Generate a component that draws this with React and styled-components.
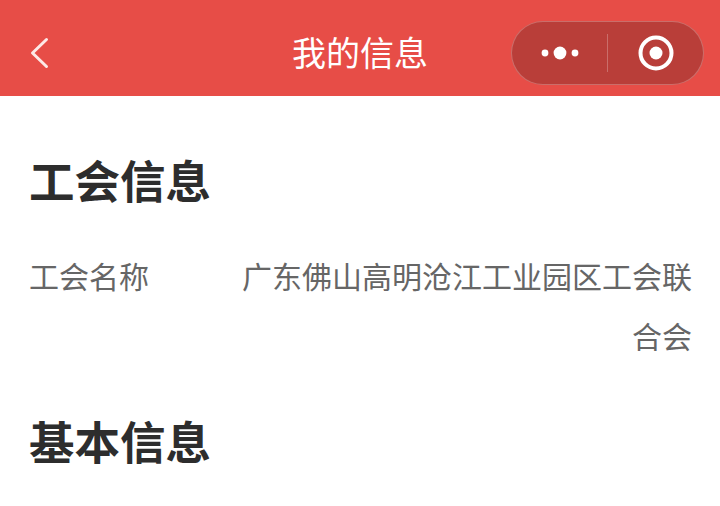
import React from 'react';
import styled, { createGlobalStyle } from 'styled-components';

const GlobalStyle = createGlobalStyle`
  html, body {
    margin: 0;
    padding: 0;
    background: #fff;
    font-family: "Noto Sans CJK SC", "Noto Sans", sans-serif;
  }
`;

const Page = styled.div`
  width: 720px;
  height: 506px;
  overflow: hidden;
  background: #fff;
`;

const NavBar = styled.header`
  height: 96px;
  background: #e74d47;
  display: grid;
  grid-template-columns: 1fr auto 1fr;
  align-items: center;
  box-sizing: border-box;
  padding: 10px 16px 0;
`;

const BackButton = styled.div`
  display: flex;
  align-items: center;
  height: 32px;
  margin-left: 14px;
`;

const NavTitle = styled.h1`
  margin: 0 0 2px;
  font-size: 34px;
  font-weight: 400;
  line-height: 1;
  color: #fff;
`;

const Capsule = styled.div`
  justify-self: end;
  width: 193px;
  height: 64px;
  box-sizing: border-box;
  border: 1px solid rgba(255, 255, 255, 0.25);
  border-radius: 32px;
  background: #b93e39;
  display: flex;
  align-items: center;
`;

const CapsuleCell = styled.div`
  flex: 1;
  display: flex;
  align-items: center;
  justify-content: center;
`;

const Divider = styled.div`
  width: 1px;
  height: 38px;
  background: rgba(255, 255, 255, 0.25);
`;

const Content = styled.main`
  padding: 54px 28px 0 29px;
`;

const SectionTitle = styled.h2`
  margin: 0;
  font-size: 45.500px;
  font-weight: 700;
  line-height: 62px;
  color: #2d2d2d;
  position: relative;
  top: -2px;
`;

const InfoRow = styled.div`
  display: flex;
  justify-content: space-between;
  margin-top: 33px;
  margin-bottom: 46px;
`;

const InfoLabel = styled.span`
  flex: none;
  font-size: 30px;
  line-height: 60px;
  color: #666;
`;

const InfoValue = styled.span`
  width: 452px;
  font-size: 30px;
  line-height: 60px;
  color: #666;
  text-align: right;
`;

export default function App() {
  return (
    <Page>
      <GlobalStyle />
      <NavBar>
        <BackButton>
          <svg width="20" height="32" viewBox="0 0 20 32" fill="none">
            <path d="M16.500 2.500 L2.500 16 L16.500 29.500" stroke="#fde9e7" strokeWidth="3" strokeLinecap="round" strokeLinejoin="round" />
          </svg>
        </BackButton>
        <NavTitle>我的信息</NavTitle>
        <Capsule>
          <CapsuleCell>
            <svg width="38" height="14" viewBox="0 0 38 14" fill="#fff">
              <circle cx="4" cy="7" r="3.400" />
              <circle cx="19" cy="7" r="6.400" />
              <circle cx="34" cy="7" r="3.400" />
            </svg>
          </CapsuleCell>
          <Divider />
          <CapsuleCell>
            <svg width="36" height="36" viewBox="0 0 36 36" fill="none">
              <circle cx="18" cy="18" r="15.500" stroke="#fff" strokeWidth="4" />
              <circle cx="18" cy="18" r="6.500" fill="#fff" />
            </svg>
          </CapsuleCell>
        </Capsule>
      </NavBar>
      <Content>
        <SectionTitle>工会信息</SectionTitle>
        <InfoRow>
          <InfoLabel>工会名称</InfoLabel>
          <InfoValue>广东佛山高明沧江工业园区工会联合会</InfoValue>
        </InfoRow>
        <SectionTitle>基本信息</SectionTitle>
      </Content>
    </Page>
  );
}
